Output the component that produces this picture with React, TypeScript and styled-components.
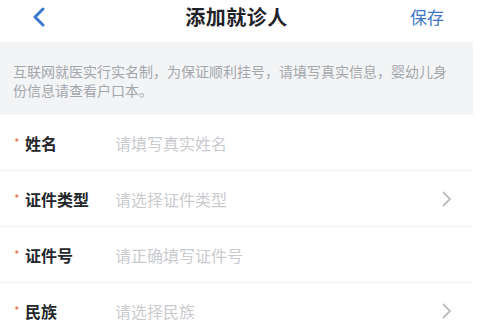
import React from "react";
import styled, { createGlobalStyle } from "styled-components";

const Global = createGlobalStyle`
  html, body { margin: 0; padding: 0; background: #ffffff; }
  body { font-family: "Noto Sans CJK SC", "Noto Sans", sans-serif; -webkit-font-smoothing: antialiased; }
`;

const Page = styled.div`
  width: 473px;
  background: #ffffff;
`;

const Header = styled.header`
  height: 42px;
  display: grid;
  grid-template-columns: 1fr auto 1fr;
  align-items: center;
`;

const BackButton = styled.button`
  justify-self: start;
  margin-left: 32px;
  padding: 0;
  border: none;
  background: none;
  display: flex;
  align-items: center;
  height: 24px;
  margin-top: -8px;
  cursor: pointer;
`;

const Title = styled.h1`
  margin: 0;
  margin-top: -10px;
  font-size: 20px;
  font-weight: 700;
  color: #1f2228;
  letter-spacing: 0.5px;
`;

const SaveButton = styled.button`
  justify-self: end;
  margin-right: 29px;
  margin-top: -9px;
  padding: 0;
  border: none;
  background: none;
  font-family: inherit;
  font-size: 17px;
  color: #3f78c6;
  cursor: pointer;
`;

const Notice = styled.p`
  margin: 0;
  background: #f3f4f6;
  padding: 20px 20px 15px 13px;
  font-size: 14px;
  line-height: 19px;
  color: #a3a7ac;
`;

const Row = styled.div<{ $last?: boolean }>`
  height: 55px;
  display: grid;
  grid-template-columns: 102px 1fr auto;
  align-items: center;
  padding: 0 21px 0 13px;
  border-bottom: ${(p) => (p.$last ? "none" : "1px solid #f1f2f4")};
`;

const Label = styled.span`
  display: flex;
  align-items: center;
  font-size: 16px;
  font-weight: 700;
  color: #24272c;
`;

const Star = styled.span`
  color: #e0744f;
  font-size: 12px;
  font-weight: 400;
  width: 11px;
  margin-top: -1px;
  padding-left: 1px;
`;

const Placeholder = styled.span`
  font-size: 16px;
  color: #c9cbce;
`;

const Chevron = () => (
  <svg width="10" height="16" viewBox="0 0 10 16">
    <polyline points="1.5,1.5 8,8 1.5,14.5" fill="none" stroke="#bcbec1" strokeWidth="1.8" strokeLinecap="round" strokeLinejoin="round" />
  </svg>
);

const BackIcon = () => (
  <svg width="14" height="20" viewBox="0 0 14 20">
    <polyline points="11,2 3,10 11,18" fill="none" stroke="#3a78d0" strokeWidth="3" strokeLinecap="round" strokeLinejoin="round" />
  </svg>
);

const fields = [
  { label: "姓名", placeholder: "请填写真实姓名", arrow: false },
  { label: "证件类型", placeholder: "请选择证件类型", arrow: true },
  { label: "证件号", placeholder: "请正确填写证件号", arrow: false },
  { label: "民族", placeholder: "请选择民族", arrow: true },
];

export default function App() {
  return (
    <Page>
      <Global />
      <Header>
        <BackButton aria-label="返回">
          <BackIcon />
        </BackButton>
        <Title>添加就诊人</Title>
        <SaveButton>保存</SaveButton>
      </Header>
      <Notice>
        互联网就医实行实名制，为保证顺利挂号，请填写真实信息，婴幼儿身份信息请查看户口本。
      </Notice>
      {fields.map((f, i) => (
        <Row key={f.label} $last={i === fields.length - 1}>
          <Label>
            <Star>*</Star>
            {f.label}
          </Label>
          <Placeholder>{f.placeholder}</Placeholder>
          {f.arrow ? <Chevron /> : <span />}
        </Row>
      ))}
    </Page>
  );
}
